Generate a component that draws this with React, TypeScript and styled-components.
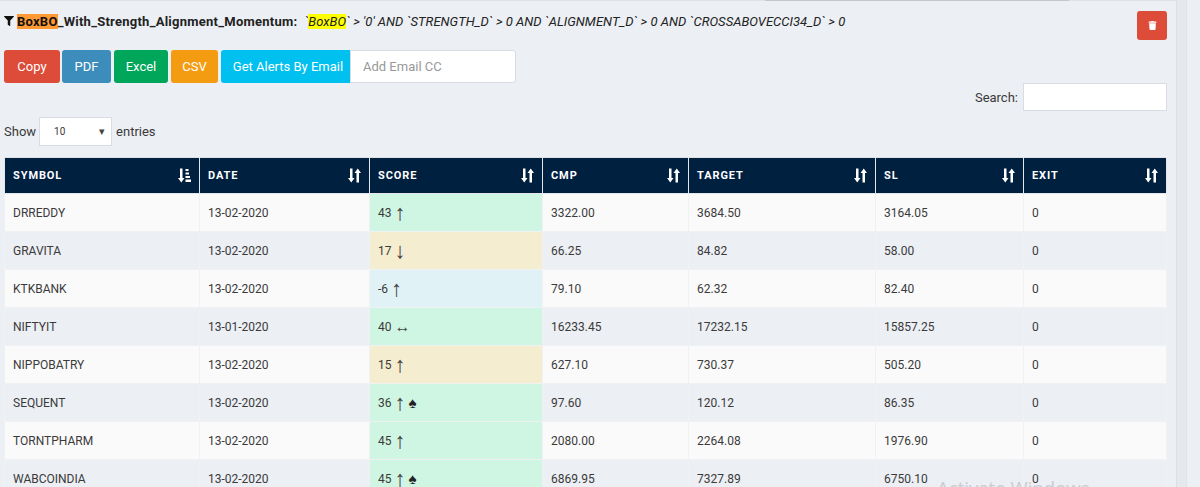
import React from 'react';
import styled, { createGlobalStyle } from 'styled-components';
import { FaFilter, FaTrash } from 'react-icons/fa';

const rows = [
  { symbol: 'DRREDDY', date: '13-02-2020', score: '43', arrow: '↑', tone: 'green', cmp: '3322.00', target: '3684.50', sl: '3164.05' },
  { symbol: 'GRAVITA', date: '13-02-2020', score: '17', arrow: '↓', tone: 'yellow', cmp: '66.25', target: '84.82', sl: '58.00' },
  { symbol: 'KTKBANK', date: '13-02-2020', score: '-6', arrow: '↑', tone: 'blue', cmp: '79.10', target: '62.32', sl: '82.40' },
  { symbol: 'NIFTYIT', date: '13-01-2020', score: '40', arrow: '↔', tone: 'green', cmp: '16233.45', target: '17232.15', sl: '15857.25' },
  { symbol: 'NIPPOBATRY', date: '13-02-2020', score: '15', arrow: '↑', tone: 'yellow', cmp: '627.10', target: '730.37', sl: '505.20' },
  { symbol: 'SEQUENT', date: '13-02-2020', score: '36', arrow: '↑', spade: true, tone: 'green', cmp: '97.60', target: '120.12', sl: '86.35' },
  { symbol: 'TORNTPHARM', date: '13-02-2020', score: '45', arrow: '↑', tone: 'green', cmp: '2080.00', target: '2264.08', sl: '1976.90' },
  { symbol: 'WABCOINDIA', date: '13-02-2020', score: '45', arrow: '↑', spade: true, tone: 'green', cmp: '6869.95', target: '7327.89', sl: '6750.10' },
];

const columns = [
  { label: 'SYMBOL', width: 195, sorted: true },
  { label: 'DATE', width: 170 },
  { label: 'SCORE', width: 173 },
  { label: 'CMP', width: 146 },
  { label: 'TARGET', width: 187 },
  { label: 'SL', width: 148 },
  { label: 'EXIT', width: 143 },
];

const toneColors: Record<string, string> = {
  green: '#cff6e3',
  yellow: '#f4edcf',
  blue: '#e1f2f7',
};

const SortIcon = ({ sorted }: { sorted?: boolean }) => (
  <svg width="13" height="15" viewBox="0 0 13 15" fill="#fff">
    <path d="M2 0.500h2.500v9.500h2l-3.250 4.500L0 10h2z" />
    {sorted ? (
      <path d="M7.500 1h3v2h-3zM7.500 4.500h3.500v2h-3.500zM7.500 8h4.500v2h-4.500zM7.500 11.500h5.500v2.500h-5.500z" />
    ) : (
      <path d="M9 14.500h2.500V5h2L10.250 0.500 7 5h2z" transform="translate(-0.500 0)" />
    )}
  </svg>
);

const App = () => (
  <>
    <GlobalStyle />
    <Page>
      <TopShadow />
      <Panel>
        <TitleRow>
          <Title>
            <FaFilter size={10} />
            <Mark>BoxBO</Mark>
            <Name>_With_Strength_Alignment_Momentum:</Name>
            <Query>
              `<Highlight>BoxBO</Highlight>` &gt; '0' AND `STRENGTH_D` &gt; 0 AND `ALIGNMENT_D` &gt; 0 AND `CROSSABOVECCI34_D` &gt; 0
            </Query>
          </Title>
          <DeleteButton>
            <FaTrash size={9} />
          </DeleteButton>
        </TitleRow>
        <Toolbar>
          <ActionButton $bg="#dd4b39" $width={56} $gap={2}>Copy</ActionButton>
          <ActionButton $bg="#3c8dbc" $width={49} $gap={3}>PDF</ActionButton>
          <ActionButton $bg="#00a65a" $width={54} $gap={3}>Excel</ActionButton>
          <ActionButton $bg="#f39c12" $width={47} $gap={3}>CSV</ActionButton>
          <EmailGroup>
            <EmailButton>Get Alerts By Email</EmailButton>
            <EmailInput placeholder="Add Email CC" />
          </EmailGroup>
        </Toolbar>
        <SearchRow>
          <label>Search:</label>
          <SearchInput />
        </SearchRow>
        <LengthRow>
          Show
          <FakeSelect>
            10
            <Caret>▾</Caret>
          </FakeSelect>
          entries
        </LengthRow>
        <Table>
          <colgroup>
            {columns.map((col) => (
              <col key={col.label} width={col.width} />
            ))}
          </colgroup>
          <thead>
            <tr>
              {columns.map((col) => (
                <HeadCell key={col.label}>
                  <HeadInner>
                    {col.label}
                    <SortIcon sorted={col.sorted} />
                  </HeadInner>
                </HeadCell>
              ))}
            </tr>
          </thead>
          <tbody>
            {rows.map((row, index) => (
              <Row key={row.symbol} $odd={index % 2 === 0}>
                <Cell>{row.symbol}</Cell>
                <Cell>{row.date}</Cell>
                <ScoreCell $tone={row.tone}>
                  <ScoreInner>
                    {row.score}
                    <Arrow $wide={row.arrow === '↔'}>{row.arrow}</Arrow>
                    {row.spade && <Spade>♠</Spade>}
                  </ScoreInner>
                </ScoreCell>
                <Cell>{row.cmp}</Cell>
                <Cell>{row.target}</Cell>
                <Cell>{row.sl}</Cell>
                <Cell>0</Cell>
              </Row>
            ))}
          </tbody>
        </Table>
      </Panel>
      <Gutter />
      <Watermark>Activate Windows</Watermark>
    </Page>
  </>
);

export default App;

const GlobalStyle = createGlobalStyle`
  html, body {
    margin: 0;
    height: 487px;
    overflow: hidden;
    background: #eceff4;
    font-family: 'Roboto', 'Liberation Sans', sans-serif;
  }
  * { box-sizing: border-box; }
`;

const Page = styled.div`
  position: relative;
  display: flex;
  width: 1200px;
  height: 487px;
  overflow: hidden;
  background: #eceff4;
`;

const TopShadow = styled.div`
  position: absolute;
  top: 0;
  left: 765px;
  width: 304px;
  height: 1px;
  background: #c4c7cc;
`;

const Panel = styled.div`
  flex: 0 0 1177px;
  height: 487px;
  padding: 0 9px 0 4px;
  border-top: 1px solid #dfe2e7;
  border-right: 1px solid #dcdfe5;
  color: #3a3a3a;
  font-size: 13px;
`;

const Gutter = styled.div`
  flex: 0 0 10px;
  height: 487px;
  background: #e5e8ed;
  border-right: 1px solid #e0e3e8;
`;

const TitleRow = styled.div`
  display: flex;
  justify-content: space-between;
  align-items: flex-start;
  height: 38px;
  padding-top: 10px;
`;

const Title = styled.div`
  display: flex;
  align-items: center;
  height: 20px;
  white-space: pre;
  color: #111;
`;

const Mark = styled.span`
  margin-left: 3px;
  background: #ff9933;
  font-weight: 700;
  letter-spacing: 0.250px;
  color: #111;
`;

const Name = styled.span`
  font-weight: 700;
  letter-spacing: 0.250px;
  color: #222;
  margin-right: 7px;
`;

const Query = styled.em`
  font-size: 13px;
  letter-spacing: 0.020px;
  color: #222;
`;

const Highlight = styled.span`
  background: #ffff00;
`;

const DeleteButton = styled.div`
  display: flex;
  align-items: center;
  justify-content: center;
  width: 30px;
  height: 29px;
  border-radius: 3px;
  background: #dd4b39;
  color: #fff;
`;

const Toolbar = styled.div`
  display: flex;
  height: 33px;
  margin-top: 11px;
`;

const ActionButton = styled.div<{ $bg: string; $width: number; $gap: number }>`
  display: flex;
  align-items: center;
  justify-content: center;
  width: ${(p) => p.$width}px;
  margin-right: ${(p) => p.$gap}px;
  border-radius: 3px;
  background: ${(p) => p.$bg};
  color: #fff;
  font-size: 13px;
`;

const EmailGroup = styled.div`
  display: flex;
`;

const EmailButton = styled.div`
  display: flex;
  align-items: center;
  justify-content: center;
  width: 129px;
  padding-left: 5px;
  border-radius: 3px 0 0 3px;
  background: #00c0ef;
  color: #fff;
  font-size: 13px;
`;

const EmailInput = styled.input`
  width: 166px;
  padding: 0 12px;
  border: 1px solid #d9dde3;
  border-radius: 0 3px 3px 0;
  background: #fff;
  font: inherit;
  &::placeholder { color: #999; }
`;

const SearchRow = styled.div`
  display: flex;
  justify-content: flex-end;
  align-items: center;
  gap: 5px;
  height: 28px;
`;

const SearchInput = styled.input`
  width: 144px;
  height: 28px;
  border: 1px solid #d9dde3;
  background: #fff;
`;

const LengthRow = styled.div`
  display: flex;
  align-items: center;
  height: 29px;
  margin-top: 6px;
`;

const FakeSelect = styled.div`
  display: flex;
  align-items: center;
  justify-content: space-between;
  width: 73px;
  height: 29px;
  margin: 0 4px 0 3px;
  padding: 0 6px 0 14px;
  border: 1px solid #d9dde3;
  background: #fff;
  font-size: 10px;
`;

const Caret = styled.span`
  font-size: 11px;
  color: #444;
`;

const Table = styled.table`
  width: 1162px;
  margin-top: 11px;
  table-layout: fixed;
  border-collapse: collapse;
`;

const HeadCell = styled.th`
  height: 36px;
  padding: 0 8px;
  background: #00203f;
  border: 1px solid #e4e6ea;
  border-top: 1px solid #dfe2e7;
  color: #fff;
  font-size: 11px;
  font-weight: 700;
  letter-spacing: 0.900px;
  text-align: left;
`;

const HeadInner = styled.div`
  display: flex;
  align-items: center;
  justify-content: space-between;
`;

const Row = styled.tr<{ $odd: boolean }>`
  height: 38px;
  background: ${(p) => (p.$odd ? '#fafafa' : '#eceff4')};
`;

const Cell = styled.td`
  padding: 0 8px;
  border: 1px solid #f0f1f3;
  color: #3a3a3a;
  font-size: 12px;
`;

const ScoreCell = styled(Cell)<{ $tone: string }>`
  background: ${(p) => toneColors[p.$tone]};
`;

const ScoreInner = styled.div`
  display: flex;
  align-items: center;
  gap: 3px;
`;

const Arrow = styled.span<{ $wide: boolean }>`
  font-family: 'Liberation Sans', sans-serif;
  font-size: ${(p) => (p.$wide ? 16 : 22)}px;
  line-height: 16px;
  color: #444;
`;

const Spade = styled.span`
  font-size: 15px;
  line-height: 16px;
  color: #222;
`;

const Watermark = styled.div`
  position: absolute;
  left: 937px;
  top: 475px;
  color: #c9ccd1;
  font-family: 'Open Sans', sans-serif;
  font-size: 18.600px;
`;
